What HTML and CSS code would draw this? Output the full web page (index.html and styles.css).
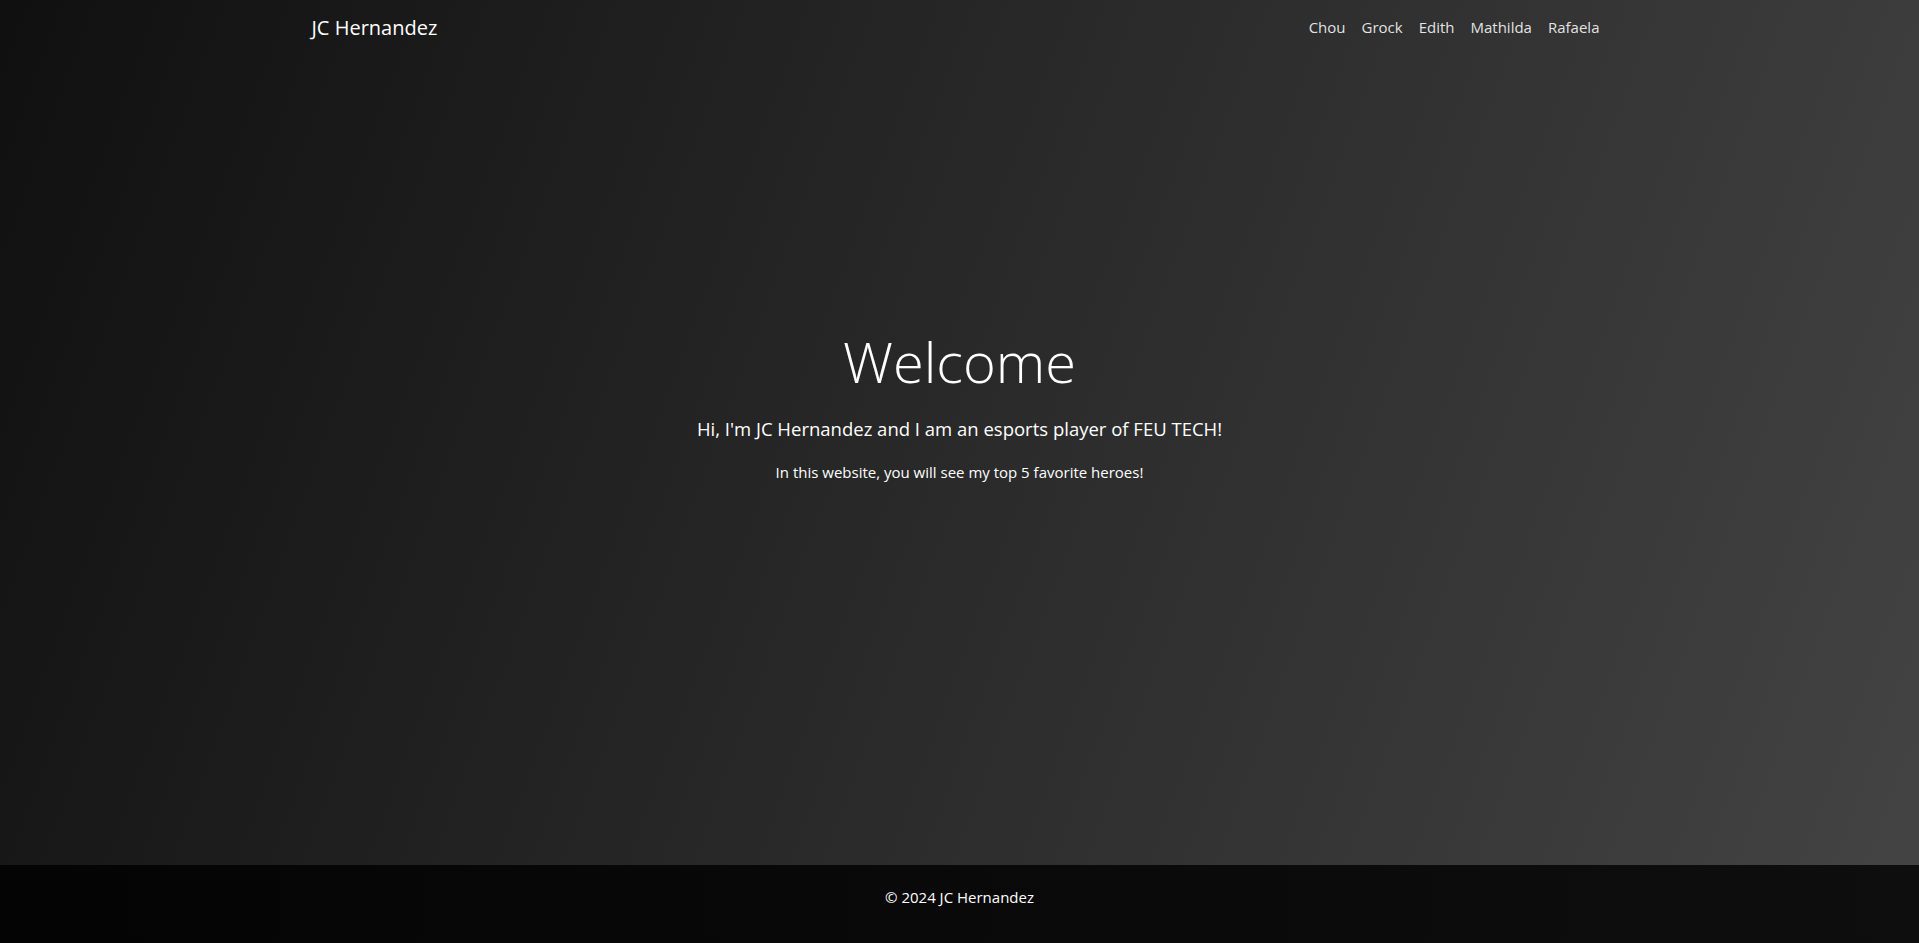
FILE: index.html
```html
<!DOCTYPE html>
<html lang="en">
<head>
<meta charset="utf-8">
<title>JC Hernandez</title>
<link rel="stylesheet" href="styles.css">
</head>
<body>
  <header class="navbar">
    <div class="container nav-inner">
      <a class="brand" href="#">JC Hernandez</a>
      <ul class="nav-links">
        <li><a class="nav-link" href="#">Chou</a></li>
        <li><a class="nav-link" href="#">Grock</a></li>
        <li><a class="nav-link" href="#">Edith</a></li>
        <li><a class="nav-link" href="#">Mathilda</a></li>
        <li><a class="nav-link" href="#">Rafaela</a></li>
      </ul>
    </div>
  </header>
  <main class="hero">
    <div class="container hero-inner">
      <h1 class="title">Welcome</h1>
      <p class="lead">Hi, I'm JC Hernandez and I am an esports player of FEU TECH!</p>
      <p class="sub">In this website, you will see my top 5 favorite heroes!</p>
    </div>
  </main>
  <footer class="footer">
    <p class="copy">&copy; 2024 JC Hernandez</p>
  </footer>
</body>
</html>
```

FILE: styles.css
```css
* { box-sizing: border-box; }

html, body { height: 100%; }

body {
  margin: 0;
  min-height: 100vh;
  display: flex;
  flex-direction: column;
  font-family: "Open Sans", "Noto Sans", sans-serif;
  font-size: 16px;
  line-height: 1.5;
  color: #fff;
  background: linear-gradient(110deg, #101010 0%, #444444 100%);
}

.container {
  width: 100%;
  max-width: 1320px;
  margin: 0 auto;
  padding: 0 12px;
}

.navbar {
  background: transparent;
  padding: 8px 0;
}

.nav-inner {
  display: flex;
  align-items: center;
  justify-content: space-between;
}

.brand {
  color: #fff;
  text-decoration: none;
  font-size: 20px;
  line-height: 30px;
  padding: 5px 0;
}

.nav-links {
  list-style: none;
  margin: 0;
  padding: 0;
  display: flex;
}

.nav-link {
  display: block;
  padding: 7px 8px 9px;
  color: rgba(255, 255, 255, 0.88);
  text-decoration: none;
  font-size: 15px;
}

.hero {
  flex: 1;
  display: flex;
  flex-direction: column;
}

.hero-inner {
  text-align: center;
  padding-top: 272px;
}

.title {
  margin: 0 0 19px;
  font-size: 56px;
  font-weight: 350;
  line-height: 1.2;
}

.lead {
  margin: 0 0 16px;
  font-size: 18.5px;
  font-weight: 400;
  line-height: 30px;
}

.sub {
  margin: 0 0 16px;
  font-size: 15px;
  line-height: 24px;
}

.footer {
  background: linear-gradient(to right, #040404, #0e0e0e);
  padding: 20px 0 34px;
  text-align: center;
}

.copy {
  margin: 0;
  font-size: 15px;
  line-height: 24px;
}
```
